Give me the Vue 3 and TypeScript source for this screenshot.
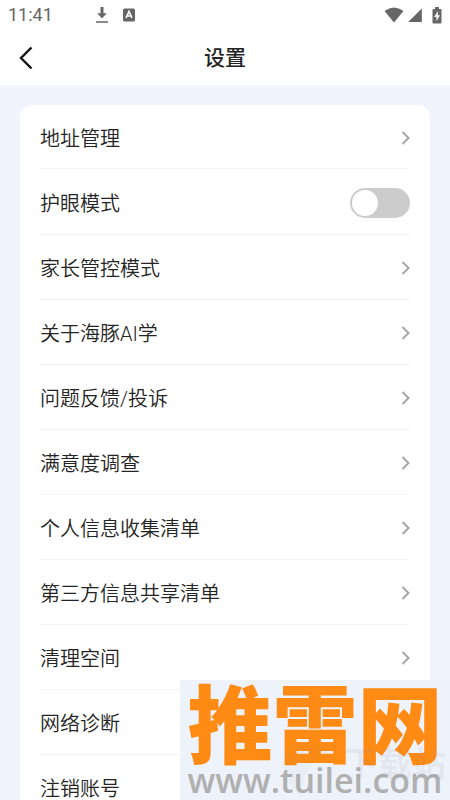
<script setup lang="ts">
import { ref } from 'vue'

interface SettingItem {
  label: string
  kind: 'link' | 'switch'
}

const eyeCare = ref(false)

const items: SettingItem[] = [
  { label: '地址管理', kind: 'link' },
  { label: '护眼模式', kind: 'switch' },
  { label: '家长管控模式', kind: 'link' },
  { label: '关于海豚AI学', kind: 'link' },
  { label: '问题反馈/投诉', kind: 'link' },
  { label: '满意度调查', kind: 'link' },
  { label: '个人信息收集清单', kind: 'link' },
  { label: '第三方信息共享清单', kind: 'link' },
  { label: '清理空间', kind: 'link' },
  { label: '网络诊断', kind: 'link' },
  { label: '注销账号', kind: 'link' },
]
</script>

<template>
  <div class="page">
    <div class="status">
      <span class="time">11:41</span>
      <svg class="download" width="14" height="18" viewBox="0 0 14 18" aria-hidden="true">
        <path d="M5.500 1h3v6.300h3.300L7 12.400 2.200 7.300h3.300zM1 15.200h12v1.600H1z" />
      </svg>
      <svg class="app-badge" width="12" height="14" viewBox="0 0 12 14" aria-hidden="true">
        <rect width="12" height="13" y=".5" rx="1.500" />
        <path class="letter" d="M3 10 6 3.500 9 10M4.200 8h3.600" />
      </svg>
      <div class="signals">
        <svg width="20" height="16" viewBox="0 0 20 16" aria-hidden="true">
          <path d="M.5 4Q10-3 19.500 4L10 15.500z" />
        </svg>
        <svg width="14" height="16" viewBox="0 0 14 16" aria-hidden="true">
          <path d="M13.800 1.500v13.500H.2z" />
        </svg>
        <svg class="battery" width="10" height="17" viewBox="0 0 10 17" aria-hidden="true">
          <path d="M3 0h4v2h1.500q1 0 1 1v12.500q0 1-1 1h-7q-1 0-1-1V3q0-1 1-1H3z" />
          <path class="bolt" d="M5.800 4 2.200 10h2.300v4.200L8 8.200H5.800z" />
        </svg>
      </div>
    </div>

    <header class="header">
      <button class="back" type="button" aria-label="返回">
        <svg width="14" height="24" viewBox="0 0 14 24" aria-hidden="true">
          <path d="M12.500 1.500 2 12l10.500 10.500" />
        </svg>
      </button>
      <h1>设置</h1>
    </header>

    <main class="content">
      <ul class="card">
        <li v-for="item in items" :key="item.label">
          <label v-if="item.kind === 'switch'" class="row switch-row">
            <span class="row-label">{{ item.label }}</span>
            <input v-model="eyeCare" class="switch" type="checkbox" role="switch" />
          </label>
          <button v-else class="row" type="button">
            <span class="row-label">{{ item.label }}</span>
            <svg class="chevron" width="9" height="14" viewBox="0 0 9 14" aria-hidden="true">
              <path d="M1.500 1 7.500 7l-6 6" />
            </svg>
          </button>
        </li>
      </ul>
    </main>

    <aside class="mark">
      <svg class="swirl" width="60" height="60" viewBox="0 0 60 60" aria-hidden="true">
        <path d="M6 34Q-2 8 22 3Q40 2 52 16Q36 13 29 29Q20 43 22 57Q12 50 6 34z" />
      </svg>
      <span class="ghost">下载站</span>
      <strong class="mark-name">推雷网</strong>
      <span class="mark-url">www.tuilei.com</span>
    </aside>
  </div>
</template>

<style>
body {
  margin: 0;
}
</style>

<style scoped>
.page {
  position: relative;
  display: flex;
  flex-direction: column;
  height: 100vh;
  overflow: hidden;
  background: #f1f4fd;
  color: #242424;
  font-family: Roboto, "Noto Sans CJK SC", sans-serif;
}

.status {
  display: flex;
  flex: none;
  align-items: center;
  height: 30px;
  padding: 0 8px;
  background: #fff;
  color: #666;
  fill: #666;
}

.time {
  width: 87px;
  font-size: 18px;
  line-height: 32px;
}

.app-badge {
  margin-left: 14px;
}

.letter {
  fill: none;
  stroke: #fff;
  stroke-width: 1.6;
}

.signals {
  display: flex;
  align-items: center;
  gap: 4px;
  margin-left: auto;
}

.battery {
  margin-left: 6px;
}

.bolt {
  fill: #fff;
}

.header {
  display: grid;
  flex: none;
  grid-template-columns: 40px 1fr 40px;
  align-items: center;
  height: 55px;
  padding: 0 16px;
  background: #fff;
}

.back {
  display: flex;
  padding: 0 3px;
  border: 0;
  background: none;
}

.back path {
  fill: none;
  stroke: #111;
  stroke-width: 2.4;
}

h1 {
  margin: 0;
  font-size: 21px;
  font-weight: 500;
  line-height: 30px;
  text-align: center;
}

.content {
  padding: 20px;
}

.card {
  margin: 0;
  padding: 0 20px;
  border-radius: 12px;
  background: #fff;
  list-style: none;
}

.row {
  display: flex;
  align-items: center;
  justify-content: space-between;
  box-sizing: border-box;
  width: 100%;
  height: 65px;
  padding: 0;
  border: 0;
  border-bottom: 1px solid #f3f3f3;
  background: none;
  color: inherit;
  font-family: inherit;
  font-size: 20px;
  font-weight: 350;
  line-height: 30px;
  text-align: left;
}

.row-label {
  padding-top: 4px;
}

li:first-child .row {
  height: 64px;
}

.row.switch-row {
  height: 66px;
}

.chevron {
  margin-top: 2px;
}

.chevron path {
  fill: none;
  stroke: #a6a6a6;
  stroke-width: 2;
}

.switch {
  display: flex;
  align-items: center;
  box-sizing: border-box;
  width: 60px;
  height: 30px;
  margin: 2px 0 0;
  padding: 2px;
  border-radius: 15px;
  background: #ccc;
  appearance: none;
}

.switch::before {
  width: 26px;
  height: 26px;
  border-radius: 50%;
  background: #fff;
  content: "";
}

.switch:checked {
  justify-content: flex-end;
  background: #4a7dff;
}

.mark {
  position: absolute;
  right: 0;
  bottom: 0;
  display: flex;
  flex-direction: column;
  align-items: center;
  width: 270px;
  height: 120px;
  background: #eef2fa;
  white-space: nowrap;
}

.mark-name {
  color: #ff8a14;
  font-family: "Noto Sans CJK SC", sans-serif;
  font-size: 85px;
  font-weight: 900;
  line-height: 80px;
}

.mark-url {
  color: #b0b0b0;
  font-family: "Open Sans", sans-serif;
  font-size: 34px;
  font-weight: 600;
  line-height: 40px;
}

.swirl {
  position: absolute;
  right: 110px;
  bottom: 0;
  fill: rgba(110, 150, 140, 0.04);
}

.ghost {
  position: absolute;
  right: 4px;
  bottom: 16px;
  z-index: 1;
  color: rgba(120, 130, 140, 0.09);
  font-size: 34px;
  font-weight: 700;
  line-height: 40px;
}
</style>
